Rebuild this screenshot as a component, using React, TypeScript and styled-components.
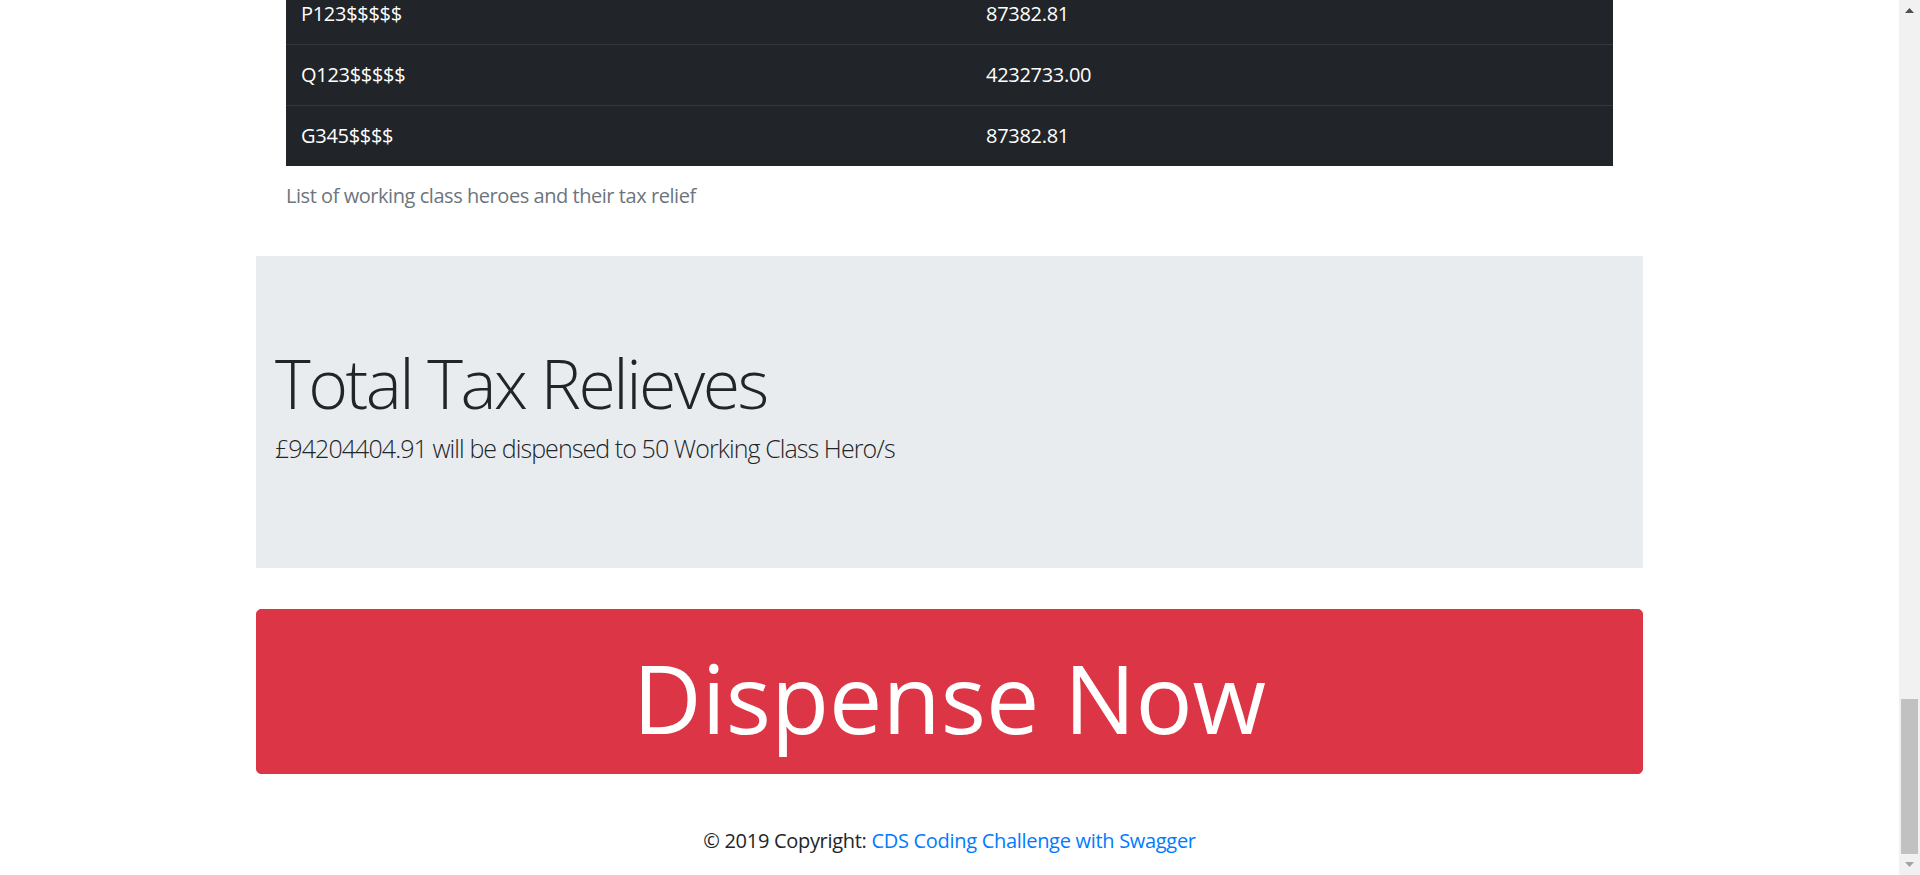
import React from "react";
import styled, { createGlobalStyle } from "styled-components";

const GlobalStyle = createGlobalStyle`
  html, body {
    margin: 0;
    padding: 0;
    overflow: hidden;
    background: #ffffff;
  }
  * { box-sizing: border-box; }
  body {
    font-family: "Open Sans", "Noto Sans", "Liberation Sans", sans-serif;
    color: #212529;
    font-size: 20px;
    line-height: 1.5;
  }
`;

const Screen = styled.div`
  display: flex;
  width: 1920px;
  height: 875px;
  overflow: hidden;
`;

const Page = styled.main`
  flex: 1;
  display: flex;
  flex-direction: column;
  align-items: center;
  overflow: hidden;
`;

const Container = styled.div`
  width: 1387px;
  display: flex;
  flex-direction: column;
`;

const TableSection = styled.section`
  padding: 0 30px;
  margin-top: -17px;
  margin-bottom: 30px;
`;

const Table = styled.table`
  width: 100%;
  border-collapse: collapse;
  caption-side: bottom;
  color: #ffffff;
`;

const Caption = styled.caption`
  caption-side: bottom;
  text-align: left;
  color: #6c757d;
  padding: 15px 0;
  line-height: 30px;
  letter-spacing: -0.45px;
`;

const Row = styled.tr`
  background: #212529;
`;

const Cell = styled.td<{ $first?: boolean }>`
  padding: 15px;
  line-height: 30px;
  border-top: 1px solid #32383e;
  width: ${(p) => (p.$first ? "685px" : "auto")};
  letter-spacing: -0.3px;
`;

const Jumbotron = styled.section`
  background: #e9ecef;
  padding: 80px 19px;
  margin-bottom: 41px;
`;

const Title = styled.h1`
  margin: 5px 0 5px;
  font-size: 68px;
  font-weight: 300;
  line-height: 84px;
  letter-spacing: -2.5px;
`;

const Lead = styled.p`
  margin: 0 0 20px;
  font-size: 25px;
  font-weight: 300;
  line-height: 37.5px;
  letter-spacing: -0.92px;
`;

const DispenseButton = styled.button`
  display: flex;
  align-items: center;
  justify-content: center;
  width: 100%;
  height: 165px;
  margin: 0 0 32px;
  padding: 13px 0 0;
  border: 1px solid #dc3545;
  border-radius: 5px;
  background: #dc3545;
  color: #ffffff;
  font-family: "Open Sans", "Noto Sans", sans-serif;
  font-size: 95px;
  font-weight: 400;
  line-height: 1;
  letter-spacing: 0;
  cursor: pointer;
`;

const Footer = styled.footer`
  width: 100%;
  padding: 20px 0;
  text-align: center;
  line-height: 30px;
  letter-spacing: -0.3px;
`;

const Link = styled.a`
  color: #007bff;
  text-decoration: none;
`;

const Scrollbar = styled.div`
  width: 21px;
  height: 875px;
  background: #f1f1f1;
  display: flex;
  flex-direction: column;
`;

const ArrowButton = styled.div<{ $color: string }>`
  height: 21px;
  display: flex;
  align-items: center;
  justify-content: center;
  color: ${(p) => p.$color};
`;

const Track = styled.div`
  flex: 1;
  display: flex;
  flex-direction: column;
  justify-content: flex-end;
  align-items: center;
`;

const Thumb = styled.div`
  width: 17px;
  height: 155px;
  background: #c1c1c1;
`;

const rows = [
  { code: "P123$$$$$", amount: "87382.81" },
  { code: "Q123$$$$$", amount: "4232733.00" },
  { code: "G345$$$$", amount: "87382.81" },
];

const Arrow = ({ up }: { up?: boolean }) => (
  <svg width="9" height="5" viewBox="0 0 9 5">
    <polygon
      points={up ? "4.5,0 9,5 0,5" : "0,0 9,0 4.5,5"}
      fill="currentColor"
    />
  </svg>
);

export default function App() {
  return (
    <>
      <GlobalStyle />
      <Screen>
        <Page>
          <Container>
            <TableSection>
              <Table>
                <Caption>List of working class heroes and their tax relief</Caption>
                <tbody>
                  {rows.map((r) => (
                    <Row key={r.code}>
                      <Cell $first>{r.code}</Cell>
                      <Cell>{r.amount}</Cell>
                    </Row>
                  ))}
                </tbody>
              </Table>
            </TableSection>
            <Jumbotron>
              <Title>Total Tax Relieves</Title>
              <Lead>£94204404.91 will be dispensed to 50 Working Class Hero/s</Lead>
            </Jumbotron>
            <DispenseButton type="button">Dispense Now</DispenseButton>
          </Container>
          <Footer>
            © 2019 Copyright: <Link href="#">CDS Coding Challenge with Swagger</Link>
          </Footer>
        </Page>
        <Scrollbar>
          <ArrowButton $color="#505050">
            <Arrow up />
          </ArrowButton>
          <Track>
            <Thumb />
          </Track>
          <ArrowButton $color="#a3a3a3">
            <Arrow />
          </ArrowButton>
        </Scrollbar>
      </Screen>
    </>
  );
}
